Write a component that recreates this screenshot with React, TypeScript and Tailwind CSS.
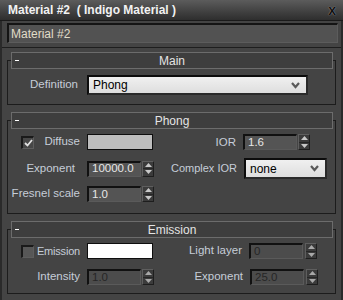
import type { ReactNode } from "react";

const Spin = ({ disabled = false }: { disabled?: boolean }) => (
  <div className="w-[12px] h-[16px] flex flex-col bg-[#3b3b3b] border-t border-l border-[#5e5e5e] border-b border-r border-b-[#1e1e1e] border-r-[#1e1e1e]">
    <div className="flex-1 flex items-center justify-center border-b border-[#262626]">
      <svg width="7" height="4" viewBox="0 0 7 4">
        <path d="M3.5 0 L7 4 L0 4 Z" fill={disabled ? "#a8a8a8" : "#c8c8c8"} />
      </svg>
    </div>
    <div className="flex-1 flex items-center justify-center">
      <svg width="7" height="4" viewBox="0 0 7 4">
        <path d="M0 0 L7 0 L3.5 4 Z" fill={disabled ? "#a8a8a8" : "#c8c8c8"} />
      </svg>
    </div>
  </div>
);

const SpinField = ({
  value,
  w,
  disabled = false,
  gap = "gap-[1px]",
}: {
  value: string;
  w: string;
  disabled?: boolean;
  gap?: string;
}) => (
  <div className={`flex items-center ${gap}`}>
    <div
      className={`${w} h-[16px] flex items-center pl-[3px] text-[11.5px] overflow-hidden border-t-2 border-l-2 border-[#111] border-b border-r border-b-[#5a5a5a] border-r-[#5a5a5a] ${
        disabled ? "bg-[#4c4c4c] text-[#262626]" : "bg-[#545454] text-[#e6e6e6]"
      }`}
    >
      {value}
    </div>
    <Spin disabled={disabled} />
  </div>
);

const Dropdown = ({ value, w, h }: { value: string; w: string; h: string }) => (
  <div
    className={`${w} ${h} flex items-center justify-between pl-[4px] pr-[6px] bg-gradient-to-b from-[#f0f0f0] to-[#dedede] border-t-2 border-l-2 border-[#0c0c0c] border-b-2 border-r-2 border-b-[#2a2a2a] border-r-[#2a2a2a] text-black text-[12px]`}
  >
    <span>{value}</span>
    <svg width="9" height="7" viewBox="0 0 9 7">
      <path d="M1 1 L4.5 5 L8 1" stroke="#5a5a5a" strokeWidth="2.2" fill="none" />
    </svg>
  </div>
);

const Check = ({ on }: { on: boolean }) => (
  <div
    className={`w-[13px] h-[13px] flex items-center justify-center border-t-2 border-l-2 border-[#1a1a1a] border-b border-r border-b-[#5e5e5e] border-r-[#5e5e5e] ${
      on ? "bg-[#474747]" : "bg-[#575757]"
    }`}
  >
    {on && (
      <svg width="9" height="8" viewBox="0 0 9 8">
        <path d="M1 4 L3.5 6.5 L8 1" stroke="#e2e2e2" strokeWidth="1.8" fill="none" />
      </svg>
    )}
  </div>
);

const Rollout = ({
  title,
  mt,
  pt,
  pb,
  children,
}: {
  title: string;
  mt: string;
  pt: string;
  pb: string;
  children: ReactNode;
}) => (
  <div className={`mx-[5px] ${mt} flex flex-col border border-[#1c1c1c]`}>
    <div className="-mt-[9px] ml-[3px] mr-[2px] h-[17px] flex items-center relative bg-[#3e3e3e] border border-[#6c6c6c] text-[#e4e4e4]">
      <div className="absolute left-[3px] top-[7px] w-[4px] h-[1px] bg-white" />
      <span className="flex-1 text-center text-[12px]">{title}</span>
    </div>
    <div className={`flex flex-col ${pt} ${pb}`}>{children}</div>
  </div>
);

const Label = ({ children, cls }: { children: ReactNode; cls: string }) => (
  <div className={`${cls} flex justify-end text-[#c6cdd8] text-[11.5px] whitespace-nowrap`}>{children}</div>
);

export default function App() {
  return (
    <div
      className="w-[343px] h-[300px] overflow-hidden bg-[#444444] flex flex-col text-[11px] leading-none"
      style={{ fontFamily: '"Liberation Sans", Arial, sans-serif' }}
    >
      <div className="h-[21px] shrink-0 flex items-center justify-between pl-[8px] pr-[7px] bg-gradient-to-b from-[#5c5c5c] to-[#2e2e2e] border-b border-[#1a1a1a]">
        <span className="text-[12px] font-bold text-[#f2f2f2] whitespace-pre">Material #2  ( Indigo Material )</span>
        <span className="text-[14px] font-bold text-[#111] [text-shadow:0_0_1px_#bbb]">x</span>
      </div>

      <div className="flex-1 flex flex-col border-x-2 border-[#2a2a2a]">
        <div className="mt-[2px] ml-[5px] mr-[3px] h-[20px] flex items-center pl-[2px] bg-[#525252] border-t-2 border-l-2 border-[#141414] border-b border-r border-b-[#5c5c5c] border-r-[#5c5c5c] text-[12px] text-[#e0dcc8]">
          Material #2
        </div>
        <div className="mt-[4px] border-t border-[#1e1e1e]" />

        <Rollout title="Main" mt="mt-[12px]" pt="pt-[6px]" pb="pb-[9px]">
          <div className="flex items-center h-[20px]">
            <Label cls="w-[70px]">Definition</Label>
            <div className="ml-[9px]">
              <Dropdown value="Phong" w="w-[221px]" h="h-[20px]" />
            </div>
          </div>
        </Rollout>

        <Rollout title="Phong" mt="mt-[15px]" pt="pt-[5px]" pb="pb-[11px]">
          <div className="flex items-center h-[16px]">
            <div className="w-[72px] flex items-center">
              <div className="ml-[13px]">
                <Check on />
              </div>
              <span className="ml-auto text-[#c6cdd8] text-[11.5px]">Diffuse</span>
            </div>
            <div className="ml-[7px] w-[66px] h-[16px] bg-[#bdbdbd] border border-[#0e0e0e]" />
            <Label cls="w-[83px] pt-[2px]">IOR</Label>
            <div className="ml-[7px]">
              <SpinField value="1.6" w="w-[54px]" />
            </div>
          </div>
          <div className="mt-[8px] flex items-center h-[21px]">
            <Label cls="w-[72px] pr-[5px]">Exponent</Label>
            <div className="ml-[7px]">
              <SpinField value="10000.0" w="w-[54px]" />
            </div>
            <Label cls="w-[83px] text-[11px]">Complex IOR</Label>
            <div className="ml-[7px]">
              <Dropdown value="none" w="w-[83px]" h="h-[21px]" />
            </div>
          </div>
          <div className="mt-[7px] flex items-center h-[16px]">
            <Label cls="w-[72px]">Fresnel scale</Label>
            <div className="ml-[7px]">
              <SpinField value="1.0" w="w-[54px]" />
            </div>
          </div>
        </Rollout>

        <Rollout title="Emission" mt="mt-[15px]" pt="pt-[5px]" pb="pb-[8px]">
          <div className="flex items-center h-[16px]">
            <div className="w-[72px] flex items-center">
              <div className="ml-[13px]">
                <Check on={false} />
              </div>
              <span className="ml-auto text-[#c6cdd8] text-[11px] tracking-[-0.2px]">Emission</span>
            </div>
            <div className="ml-[7px] w-[66px] h-[16px] bg-white border border-[#0e0e0e]" />
            <Label cls="w-[89px]">Light layer</Label>
            <div className="ml-[7px]">
              <SpinField value="0" w="w-[54px]" disabled gap="gap-[2px]" />
            </div>
          </div>
          <div className="mt-[10px] flex items-center h-[16px]">
            <Label cls="w-[72px]">Intensity</Label>
            <div className="ml-[7px]">
              <SpinField value="1.0" w="w-[54px]" disabled />
            </div>
            <Label cls="w-[89px]">Exponent</Label>
            <div className="ml-[7px]">
              <SpinField value="25.0" w="w-[54px]" disabled gap="gap-[2px]" />
            </div>
          </div>
        </Rollout>
      </div>
    </div>
  );
}
